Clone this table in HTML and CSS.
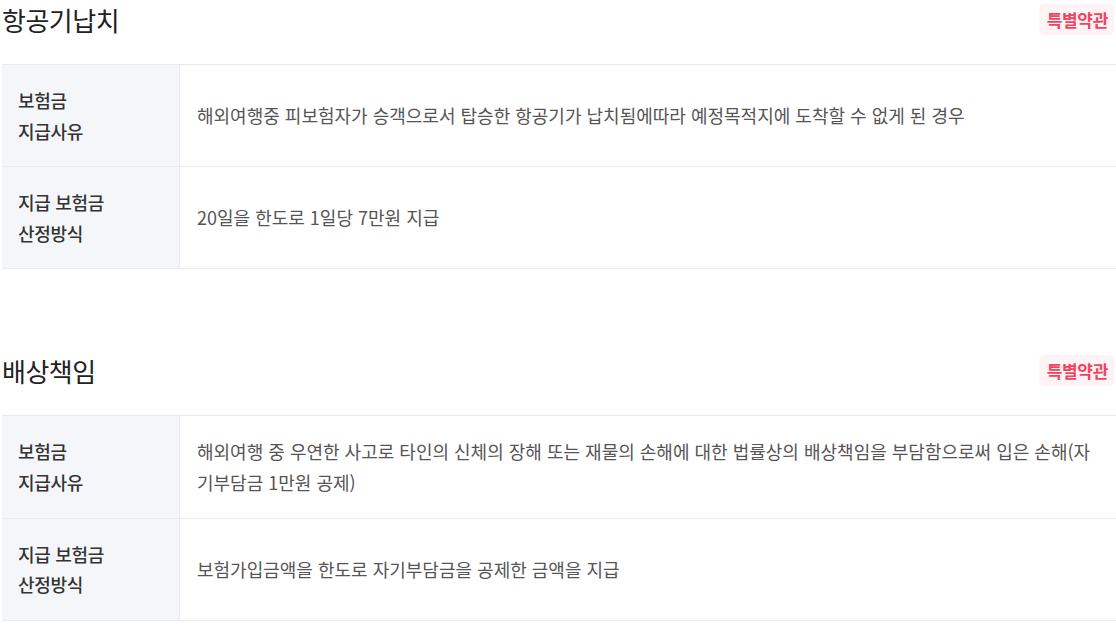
FILE: index.html
```html
<!DOCTYPE html>
<html lang="ko">
<head>
<meta charset="utf-8">
<link rel="stylesheet" href="styles.css">
</head>
<body>
<div class="page">
  <section class="sec">
    <div class="sec-head">
      <h2 class="sec-title">항공기납치</h2>
      <span class="badge">특별약관</span>
    </div>
    <div class="tbl">
      <div class="row">
        <div class="lbl">보험금<br>지급사유</div>
        <div class="val">해외여행중 피보험자가 승객으로서 탑승한 항공기가 납치됨에따라 예정목적지에 도착할 수 없게 된 경우</div>
      </div>
      <div class="row">
        <div class="lbl">지급 보험금<br>산정방식</div>
        <div class="val">20일을 한도로 1일당 7만원 지급</div>
      </div>
    </div>
  </section>
  <section class="sec">
    <div class="sec-head">
      <h2 class="sec-title">배상책임</h2>
      <span class="badge">특별약관</span>
    </div>
    <div class="tbl">
      <div class="row">
        <div class="lbl">보험금<br>지급사유</div>
        <div class="val">해외여행 중 우연한 사고로 타인의 신체의 장해 또는 재물의 손해에 대한 법률상의 배상책임을 부담함으로써 입은 손해(자기부담금 1만원 공제)</div>
      </div>
      <div class="row">
        <div class="lbl">지급 보험금<br>산정방식</div>
        <div class="val">보험가입금액을 한도로 자기부담금을 공제한 금액을 지급</div>
      </div>
    </div>
  </section>
</div>
</body>
</html>
```
FILE: styles.css
```css
* { box-sizing: border-box; }
html, body { margin: 0; padding: 0; background: #fff; }
body {
  font-family: "Noto Sans CJK KR", "Noto Sans", sans-serif;
  color: #333;
}
.page {
  padding: 4px 0 0 2px;
  width: 1116px;
}
.sec + .sec { margin-top: 86px; }
.sec-head {
  display: flex;
  justify-content: space-between;
  align-items: flex-start;
  height: 60px;
  padding-right: 2px;
}
.sec-title {
  margin: 0;
  font-size: 26px;
  font-weight: 400;
  line-height: 32px;
  color: #222;
  letter-spacing: -0.5px;
}
.badge {
  background: #fff4f5;
  color: #f4425e;
  font-size: 17px;
  font-weight: 700;
  line-height: 31px;
  padding: 0 6px 0 8px;
  border-radius: 5px;
  letter-spacing: -0.3px;
}
.tbl {
  border-top: 1px solid #e9e9ee;
}
.row {
  display: flex;
  border-bottom: 1px solid #e9e9ee;
}
.lbl {
  flex: 0 0 178px;
  background: #f5f6fa;
  border-right: 1px solid #ebecf2;
  padding: 20px 16px;
  font-size: 18px;
  line-height: 1.7;
  font-weight: 500;
  letter-spacing: -0.3px;
  color: #333;
}
.val {
  flex: 1;
  display: flex;
  align-items: center;
  padding: 20px 20px 20px 17px;
  font-size: 18px;
  line-height: 1.7;
  color: #555;
  word-break: break-all;
}
```
